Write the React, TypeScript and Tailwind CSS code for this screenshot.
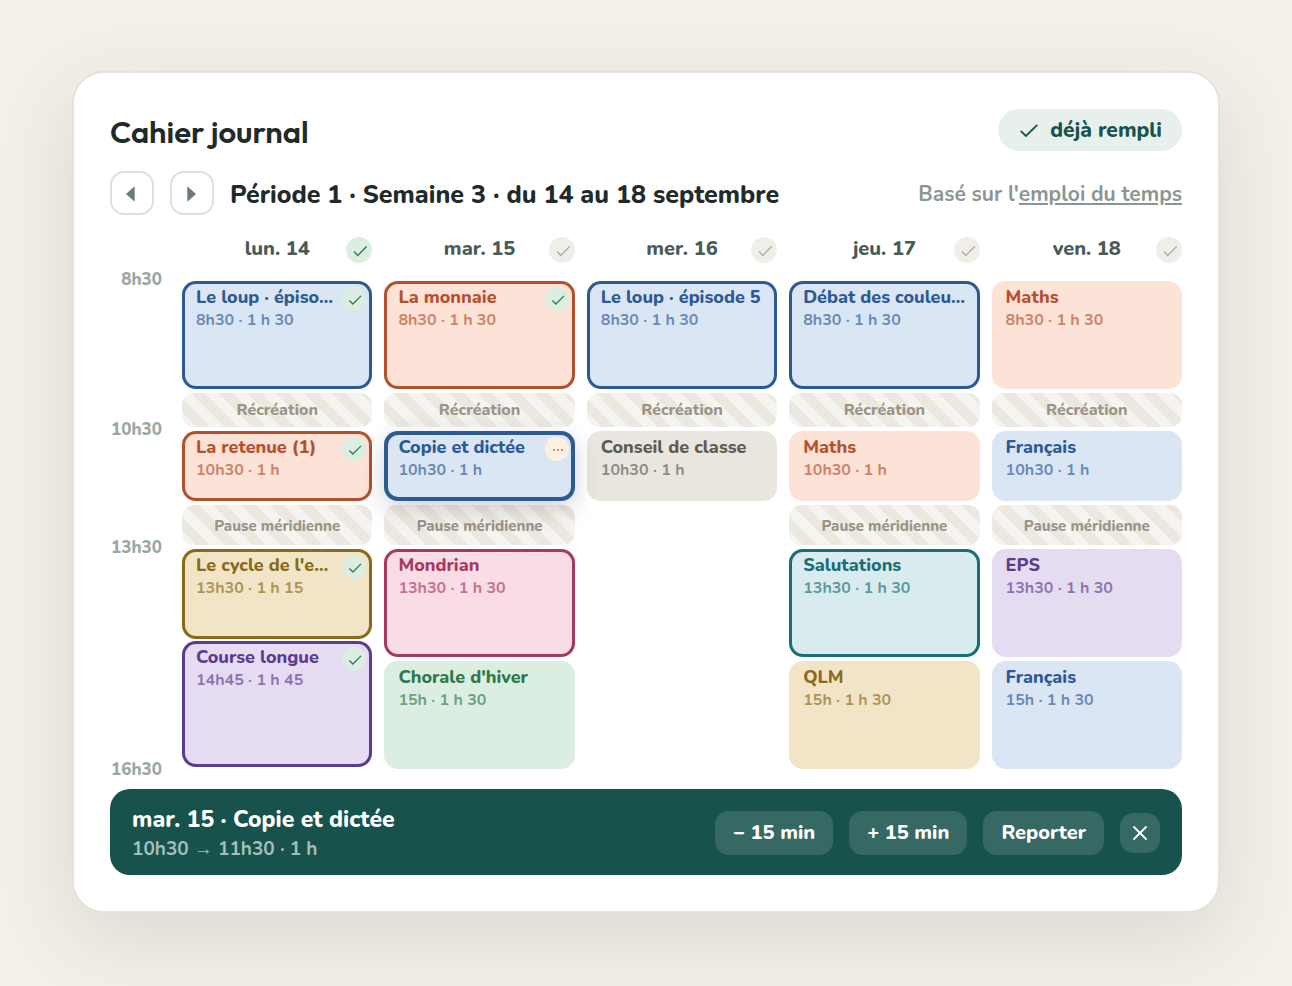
import { X } from 'lucide-react';
import clsx from 'clsx';

type Tone = 'blue' | 'orange' | 'tan' | 'purple' | 'pink' | 'green' | 'teal' | 'grey';
type Size = 'short' | 'medium' | 'regular' | 'long';

interface Course {
    title: string;
    time: string;
    tone: Tone;
    size: Size;
    planned?: boolean;
    selected?: boolean;
    status?: 'done' | 'draft';
}

interface Break {
    pause: string;
    className: string;
}

interface Day {
    label: string;
    done?: boolean;
    morning: (Course | Break)[];
    afternoon: Course[];
}

const TONES: Record<Tone, string> = {
    blue: 'bg-[#dbe6f5] text-[#2c5a92] inset-ring-[#2c5a92]',
    orange: 'bg-[#fce2d7] text-[#b5502d] inset-ring-[#b5502d]',
    tan: 'bg-[#f2e5c7] text-[#8a6a1b] inset-ring-[#8a6a1b]',
    purple: 'bg-[#e6dcf2] text-[#5b3d8f] inset-ring-[#5b3d8f]',
    pink: 'bg-[#fadce6] text-[#a63a5e] inset-ring-[#a63a5e]',
    green: 'bg-[#dceee1] text-[#2c7a4b] inset-ring-[#2c7a4b]',
    teal: 'bg-[#d8ebee] text-[#1b6e78] inset-ring-[#1b6e78]',
    grey: 'bg-[#e9e6df] text-[#5f5b52] inset-ring-[#5f5b52]',
};

const SIZES: Record<Size, string> = {
    short: 'h-[70px]',
    medium: 'h-[90px]',
    regular: 'h-[108px]',
    long: 'h-[126px]',
};

const RECESS: Break = { pause: 'Récréation', className: 'h-[34px] text-[16px]' };
const LUNCH: Break = { pause: 'Pause méridienne', className: 'h-10 pt-0.5 text-[15px]' };

const DAYS: Day[] = [
    {
        label: 'lun. 14',
        done: true,
        morning: [
            { title: 'Le loup · épisode 4', time: '8h30 · 1 h 30', tone: 'blue', size: 'regular', planned: true, status: 'done' },
            RECESS,
            { title: 'La retenue (1)', time: '10h30 · 1 h', tone: 'orange', size: 'short', planned: true, status: 'done' },
            LUNCH,
        ],
        afternoon: [
            { title: "Le cycle de l'eau", time: '13h30 · 1 h 15', tone: 'tan', size: 'medium', planned: true, status: 'done' },
            { title: 'Course longue', time: '14h45 · 1 h 45', tone: 'purple', size: 'long', planned: true, status: 'done' },
        ],
    },
    {
        label: 'mar. 15',
        morning: [
            { title: 'La monnaie', time: '8h30 · 1 h 30', tone: 'orange', size: 'regular', planned: true, status: 'done' },
            RECESS,
            { title: 'Copie et dictée', time: '10h30 · 1 h', tone: 'blue', size: 'short', selected: true, status: 'draft' },
            LUNCH,
        ],
        afternoon: [
            { title: 'Mondrian', time: '13h30 · 1 h 30', tone: 'pink', size: 'regular', planned: true },
            { title: "Chorale d'hiver", time: '15h · 1 h 30', tone: 'green', size: 'regular' },
        ],
    },
    {
        label: 'mer. 16',
        morning: [
            { title: 'Le loup · épisode 5', time: '8h30 · 1 h 30', tone: 'blue', size: 'regular', planned: true },
            RECESS,
            { title: 'Conseil de classe', time: '10h30 · 1 h', tone: 'grey', size: 'short' },
        ],
        afternoon: [],
    },
    {
        label: 'jeu. 17',
        morning: [
            { title: 'Débat des couleurs', time: '8h30 · 1 h 30', tone: 'blue', size: 'regular', planned: true },
            RECESS,
            { title: 'Maths', time: '10h30 · 1 h', tone: 'orange', size: 'short' },
            LUNCH,
        ],
        afternoon: [
            { title: 'Salutations', time: '13h30 · 1 h 30', tone: 'teal', size: 'regular', planned: true },
            { title: 'QLM', time: '15h · 1 h 30', tone: 'tan', size: 'regular' },
        ],
    },
    {
        label: 'ven. 18',
        morning: [
            { title: 'Maths', time: '8h30 · 1 h 30', tone: 'orange', size: 'regular' },
            RECESS,
            { title: 'Français', time: '10h30 · 1 h', tone: 'blue', size: 'short' },
            LUNCH,
        ],
        afternoon: [
            { title: 'EPS', time: '13h30 · 1 h 30', tone: 'purple', size: 'regular' },
            { title: 'Français', time: '15h · 1 h 30', tone: 'blue', size: 'regular' },
        ],
    },
];

function Tick({ className }: { className?: string }) {
    return (
        <svg viewBox="0 0 26 26" fill="none" stroke="currentColor" className={className} aria-hidden="true">
            <path d="M8 14.6 11.8 18.4 20.6 9.6" strokeWidth="1.4" />
        </svg>
    );
}

function CourseBlock({ course }: { course: Course }) {
    const { title, time, tone, size, planned, selected, status } = course;
    return (
        <button
            type="button"
            className={clsx(
                'relative block w-full rounded-[14px] px-3.5 pt-[5px] text-left align-top',
                TONES[tone],
                SIZES[size],
                planned && 'inset-ring-[3px]',
                selected && 'z-10 inset-ring-4 shadow-[0_8px_24px_rgba(31,42,42,0.2)]',
            )}
        >
            <span className="flex h-full flex-col">
                <span className={clsx('truncate text-[18px] leading-[22px] font-extrabold', status && 'pr-6')}>{title}</span>
                <span className="text-[16px] leading-6 font-bold opacity-65">{time}</span>
            </span>
            {status === 'done' && (
                <span className="absolute top-1.5 right-1.5 size-6 rounded-full bg-[#dceee1] text-[#2c7a4b]">
                    <Tick className="size-6" />
                </span>
            )}
            {status === 'draft' && (
                <span className="absolute top-1.5 right-1.5 size-6 rounded-full bg-[#fdf0e0] text-[#c07a2c]">
                    <svg viewBox="0 0 24 24" fill="currentColor" className="size-6" aria-hidden="true">
                        <path d="M8 12h1.8v1.8H8zM12 12h1.8v1.8H12zM16 12h1.8v1.8H16z" />
                    </svg>
                </span>
            )}
        </button>
    );
}

function BreakBlock({ item }: { item: Break }) {
    return (
        <div
            className={clsx(
                'flex items-center justify-center overflow-hidden rounded-xl bg-[repeating-linear-gradient(45deg,#f6f4f0_0_10px,#ebe8e0_10px_20px)] font-extrabold whitespace-nowrap text-[#9a9488]',
                item.className,
            )}
        >
            {item.pause}
        </div>
    );
}

export default function App() {
    return (
        <div className="min-h-screen bg-[#f3f0e8] px-[72px] pt-[71px] pb-[73px] font-['Nunito','Open_Sans',sans-serif] text-[#1f2a2a]">
            <main className="rounded-[32px] border-2 border-[#e6e3da] bg-white p-9 shadow-[0_24px_80px_rgba(31,50,46,0.12)]">
                <header className="flex h-[42px] items-center justify-between">
                    <h1 className="pt-1 font-['Outfit','Nunito',sans-serif] text-[31px] leading-9 font-semibold">Cahier journal</h1>
                    <span className="flex h-[42px] items-center rounded-full bg-[#e8f0ee] pr-5 pl-[22px] text-[21px] font-extrabold text-[#18524d]">
                        <svg viewBox="0 0 18 13" fill="none" stroke="currentColor" className="mr-3 h-[13px] w-[18px]" aria-hidden="true">
                            <path d="M.7 6.8 5.9 12 17.3.8" strokeWidth="1.8" />
                        </svg>
                        <span className="pt-0.5">déjà rempli</span>
                    </span>
                </header>

                <div className="mt-5 flex items-center gap-4">
                    <button type="button" aria-label="Semaine précédente" className="flex size-11 items-center justify-center rounded-[14px] border-2 border-[#e3dfd3] text-[#6b7b77]">
                        <svg viewBox="0 0 20 20" fill="currentColor" className="size-5">
                            <path d="M12.7 3.3V18.7L4 11Z" />
                        </svg>
                    </button>
                    <button type="button" aria-label="Semaine suivante" className="flex size-11 items-center justify-center rounded-[14px] border-2 border-[#e3dfd3] text-[#6b7b77]">
                        <svg viewBox="0 0 20 20" fill="currentColor" className="size-5">
                            <path d="M5.3 3.3V18.7L14 11Z" />
                        </svg>
                    </button>
                    <h2 className="pt-[3px] text-[25px] leading-8 font-extrabold whitespace-nowrap">Période 1 · Semaine 3 · du 14 au 18 septembre</h2>
                    <p className="ml-auto pt-0.5 text-[21px] leading-7 font-bold whitespace-nowrap text-[#8a9691]">
                        Basé sur l'<a href="#emploi-du-temps" className="underline">emploi du temps</a>
                    </p>
                </div>

                <div className="mt-[22px] flex gap-3">
                    <div className="w-[60px] shrink-0" />
                    <div className="grid flex-1 grid-cols-5 gap-3">
                        {DAYS.map((day) => (
                            <div key={day.label} className="flex items-center">
                                <div className="w-[26px]" />
                                <h3 className="flex-1 pb-0.5 text-center text-[20px] leading-[22px] font-extrabold text-[#4a5a57]">{day.label}</h3>
                                <span className={clsx('size-[26px] rounded-full', day.done ? 'bg-[#dceee1] text-[#2c7a4b]' : 'bg-[#f0eee8] text-[#b0ac9e]')}>
                                    <Tick className="size-[26px]" />
                                </span>
                            </div>
                        ))}
                    </div>
                </div>

                <div className="mt-1.5 flex gap-3">
                    <div className="w-[60px] shrink-0 pr-2 text-right text-[17px] leading-[22px] font-extrabold text-[#9aa8a3]">
                        <div className="h-[150px]">8h30</div>
                        <div className="h-[118px]">10h30</div>
                        <div className="h-[222px]">13h30</div>
                        <div className="h-[30px]">16h30</div>
                    </div>
                    <div className="grid flex-1 grid-cols-5 gap-3 pt-3">
                        {DAYS.map((day) => (
                            <div key={day.label} className="flex min-w-0 flex-col gap-1">
                                {day.morning.map((item, i) =>
                                    'pause' in item ? <BreakBlock key={i} item={item} /> : <CourseBlock key={i} course={item} />,
                                )}
                                <div className={clsx('flex flex-col', day.done ? 'gap-0.5' : 'gap-1')}>
                                    {day.afternoon.map((course, i) => (
                                        <CourseBlock key={i} course={course} />
                                    ))}
                                </div>
                            </div>
                        ))}
                    </div>
                </div>

                <section className="flex items-center gap-4 rounded-[20px] bg-[#18524d] px-[22px] pt-3.5 pb-3 text-white">
                    <div className="mr-auto pt-0.5">
                        <p className="text-[23px] leading-[30px] font-extrabold">mar. 15 · Copie et dictée</p>
                        <p className="text-[19px] leading-7 font-bold text-[#a3bfbb]">10h30 → 11h30 · 1 h</p>
                    </div>
                    <button type="button" className="h-11 rounded-[14px] bg-white/13 px-[18px] text-[20px] font-extrabold">− 15 min</button>
                    <button type="button" className="h-11 rounded-[14px] bg-white/13 px-[18px] text-[20px] font-extrabold">+ 15 min</button>
                    <button type="button" className="h-11 rounded-[14px] bg-white/13 px-[18px] text-[20px] font-extrabold">Reporter</button>
                    <button type="button" aria-label="Fermer" className="flex size-10 items-center justify-center rounded-[14px] bg-white/13">
                        <X size={24} strokeWidth={1.8} />
                    </button>
                </section>
            </main>
        </div>
    );
}
